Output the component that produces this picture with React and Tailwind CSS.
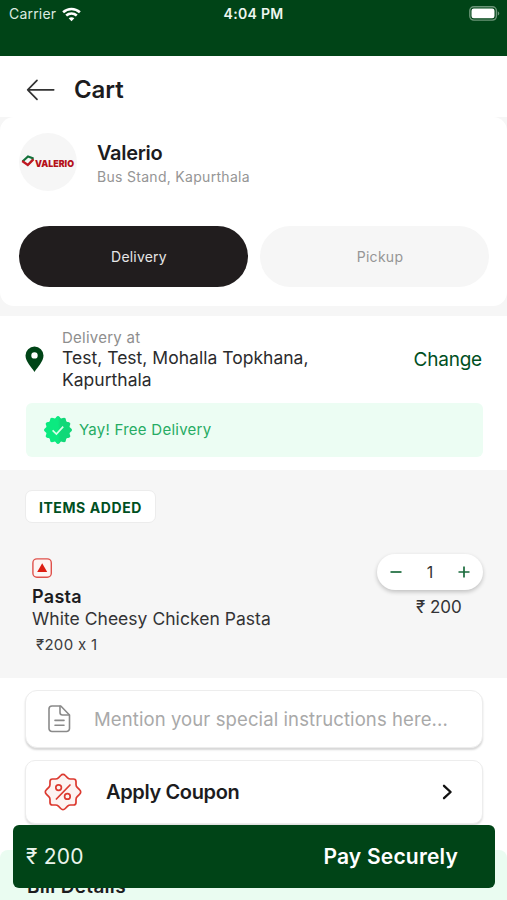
import React from "react";

const SCALLOPS = 12;

function scallopPath(cx, cy, outer, inner) {
  const pts = [];
  for (let i = 0; i < SCALLOPS * 8; i++) {
    const a = (i / (SCALLOPS * 8)) * Math.PI * 2 - Math.PI / 2;
    const r = (outer + inner) / 2 + ((outer - inner) / 2) * Math.cos((a + Math.PI / 2) * SCALLOPS);
    pts.push(`${(cx + r * Math.cos(a)).toFixed(2)} ${(cy + r * Math.sin(a)).toFixed(2)}`);
  }
  return `M${pts.join("L")}Z`;
}

function StatusBar() {
  return (
    <div className="flex h-[56px] items-start justify-between bg-[#004417] pl-[9px] pr-[7px] text-white">
      <div className="flex h-[28px] w-[109px] items-center gap-[6px]">
        <span className="text-[14px] leading-[28px] tracking-[0.2px] text-[#dcebe0]">Carrier</span>
        <svg width="19" height="15" viewBox="0 0 19 15" fill="none" stroke="#fff" strokeWidth="2.6">
          <path d="M1.1 5.2C6 .9 13 .9 17.9 5.2" />
          <path d="M4.2 8.6C7.3 5.9 11.7 5.9 14.8 8.6" />
          <path d="M9.5 14.2L6.7 11.3C8.3 10 10.7 10 12.3 11.3Z" fill="#fff" stroke="none" />
        </svg>
      </div>
      <span className="text-[14px] font-semibold leading-[28px] tracking-[0.3px] text-[#eef6f0]">4:04 PM</span>
      <div className="flex h-[26px] w-[111px] items-center justify-end">
        <svg width="31" height="15" viewBox="0 0 31 15">
          <rect x="0.8" y="0.7" width="26.6" height="13.4" rx="4" fill="none" stroke="#6b9578" strokeWidth="1.4" />
          <rect x="2.5" y="2.5" width="23" height="9.8" rx="2.2" fill="#fff" />
          <path d="M28.8 5.2C30.8 6 30.8 8.8 28.8 9.6Z" fill="#6b9578" />
        </svg>
      </div>
    </div>
  );
}

function Header() {
  return (
    <div className="flex h-[61px] items-center gap-[19px] bg-white pl-[26px] pt-[7px]">
      <svg width="29" height="22" viewBox="0 0 29 22" fill="none" stroke="#333" strokeWidth="1.7" strokeLinecap="round" strokeLinejoin="round">
        <path d="M27.7 10.8H1.7M11 1.3L1.7 10.8L11 20.3" />
      </svg>
      <h1 className="text-[24px] font-semibold leading-[30px] tracking-[-0.1px] text-[#1c1c1e]">Cart</h1>
    </div>
  );
}

function Restaurant() {
  return (
    <section className="h-[199px] bg-[#f6f6f6]">
      <div className="h-[189px] rounded-[14px] bg-white px-[19px] pt-[16px]">
        <div className="flex h-[60px] items-start gap-[20px]">
          <div className="flex size-[58px] shrink-0 items-center justify-center rounded-full bg-[#f6f6f6]">
            <svg width="54" height="16" viewBox="0 0 54 16">
              <path d="M1.5 7.5L7 2.5L12.5 4.5" fill="none" stroke="#12713a" strokeWidth="2.2" />
              <path d="M12.5 4.5L7.5 10.2" fill="none" stroke="#12713a" strokeWidth="1.6" />
              <path d="M1.2 7L6.8 11L12.4 5.4" fill="none" stroke="#c01822" strokeWidth="2.2" />
              <text x="14" y="12.6" fontSize="9.4" fontWeight="900" textLength="39" lengthAdjust="spacingAndGlyphs" fill="#b5121b" fontFamily="Inter, sans-serif">VALERIO</text>
            </svg>
          </div>
          <div className="pt-[8px]">
            <h2 className="text-[20px] font-semibold leading-[25px] tracking-[-0.3px] text-[#1c1c1e]">Valerio</h2>
            <p className="text-[14px] leading-[22px] tracking-[0.3px] text-[#959595]">Bus Stand, Kapurthala</p>
          </div>
        </div>
        <div className="mt-[33px] grid h-[61px] grid-cols-[229px_229px] gap-[12px]">
          <button className="flex items-center justify-center rounded-full bg-[#211d1e] pl-[11px] text-[14px] tracking-[0.2px] text-[#e6e6e6]">Delivery</button>
          <button className="flex items-center justify-center rounded-full bg-[#f6f6f6] pl-[11px] text-[14px] tracking-[0.3px] text-[#959595]">Pickup</button>
        </div>
      </div>
    </section>
  );
}

function Address() {
  return (
    <section className="h-[154px] bg-white px-[25px] pt-[12px]">
      <div className="flex h-[75px] items-start">
        <svg className="mt-[18px] shrink-0" width="19" height="27" viewBox="0 0 19 27">
          <path fillRule="evenodd" d="M9.5.5A9 9 0 0 0 .5 9.5C.5 15.5 6.5 21 9.5 26C12.5 21 18.5 15.5 18.5 9.5A9 9 0 0 0 9.5.5ZM9.5 6.2A3.2 3.2 0 1 1 9.5 12.6A3.2 3.2 0 1 1 9.5 6.2Z" fill="#004417" />
        </svg>
        <div className="ml-[18px] flex-1">
          <p className="text-[15px] leading-[19px] tracking-[0.25px] text-[#8e8e8e]">Delivery at</p>
          <p className="text-[17.5px] leading-[22px] tracking-[0.02px] text-[#2b2b2d]">Test, Test, Mohalla Topkhana,<br />Kapurthala</p>
        </div>
        <button className="mt-[19px] text-[19px] leading-[26px] tracking-[-0.2px] text-[#004f1f]">Change</button>
      </div>
      <div className="ml-[1px] mr-[-1px] flex h-[54px] items-center gap-[7px] rounded-[6px] bg-[#ecfdf3] pl-[18px]">
        <svg width="28" height="28" viewBox="0 0 28 28">
          <defs>
            <linearGradient id="seal" x1="0" y1="0" x2="1" y2="0">
              <stop offset="0.5" stopColor="#0bea80" />
              <stop offset="0.6" stopColor="#10d878" />
            </linearGradient>
          </defs>
          <path d={scallopPath(14, 14, 14, 12)} fill="url(#seal)" />
          <path d="M8.6 14.3L12.4 18L19.2 10.6" fill="none" stroke="#d8ffe9" strokeWidth="1.7" />
        </svg>
        <span className="pt-px text-[15px] tracking-[0.25px] text-[#26ac63]">Yay! Free Delivery</span>
      </div>
    </section>
  );
}

function Items() {
  return (
    <section className="h-[208px] bg-[#f6f6f6] px-[25px] pt-[20px]">
      <div className="flex h-[33px] w-[131px] items-center justify-center rounded-[7px] border border-[#ececec] bg-white pt-px text-[14px] font-bold tracking-[0.6px] text-[#004f1f]">ITEMS ADDED</div>
      <div className="mt-[31px] flex items-start justify-between">
        <div className="pl-[7px] pt-[4px]">
          <svg width="20" height="20" viewBox="0 0 20 20">
            <rect x="0.9" y="0.9" width="18.4" height="18.4" rx="4" fill="#fdf5f4" stroke="#df514b" strokeWidth="1.4" />
            <path d="M10.2 5.2L15.2 14H5.2Z" fill="#dc1e13" />
          </svg>
          <h3 className="mt-[8px] text-[18px] font-semibold leading-[22px] tracking-[0.3px] text-[#1c1c1e]">Pasta</h3>
          <p className="text-[17.5px] leading-[22px] tracking-[0.03px] text-[#333335]">White Cheesy Chicken Pasta</p>
          <p className="pl-[4px] pt-[4px] text-[15px] leading-[21px] tracking-[0.3px] text-[#3b3b3d] [font-feature-settings:'calt'_0]">₹200 x 1</p>
        </div>
        <div className="mr-[-1px] flex w-[106px] flex-col">
          <div className="flex h-[36px] items-center justify-between rounded-full bg-white px-[13px] shadow-[0_2px_4px_rgba(0,0,0,0.22)]">
            <svg width="12" height="12" viewBox="0 0 12 12" stroke="#1a6b3c" strokeWidth="1.7"><path d="M0.5 6H11.5" /></svg>
            <span className="text-[16px] text-[#333]">1</span>
            <svg width="12" height="12" viewBox="0 0 12 12" stroke="#1a6b3c" strokeWidth="1.7"><path d="M0.5 6H11.5M6 .5V11.5" /></svg>
          </div>
          <p className="pl-[39px] pt-[5px] text-[17px] leading-[24px] text-[#333335]">₹ 200</p>
        </div>
      </div>
    </section>
  );
}

function CouponIcon() {
  return (
    <svg width="38" height="38" viewBox="-19 -19 38 38" fill="none" stroke="#dc3a30" strokeWidth="1.7" strokeLinecap="round" strokeLinejoin="round">
      <path
        fill="#fdf3f2"
        d="M0-17.7Q1.2-17.7 2.3-16.5L4.6-14.2Q5.8-13 7.5-13H10.5Q13-13 13-10.5V-7.5Q13-5.8 14.2-4.6L16.5-2.3Q17.7-1.2 17.7 0Q17.7 1.2 16.5 2.3L14.2 4.6Q13 5.8 13 7.5V10.5Q13 13 10.5 13H7.5Q5.8 13 4.6 14.2L2.3 16.5Q1.2 17.7 0 17.7Q-1.2 17.7-2.3 16.5L-4.6 14.2Q-5.8 13-7.5 13H-10.5Q-13 13-13 10.5V7.5Q-13 5.8-14.2 4.6L-16.5 2.3Q-17.7 1.2-17.7 0Q-17.7-1.2-16.5-2.3L-14.2-4.6Q-13-5.8-13-7.5V-10.5Q-13-13-10.5-13H-7.5Q-5.8-13-4.6-14.2L-2.3-16.5Q-1.2-17.7 0-17.7Z"
      />
      <path d="M7-7L-6.6 7" />
      <circle cx="-4.4" cy="-4.4" r="2.8" />
      <circle cx="4.4" cy="4.4" r="2.8" />
    </svg>
  );
}

function Extras() {
  return (
    <section className="h-[172px] bg-white px-[25px] pt-[12px]">
      <div className="flex h-[58px] w-[458px] items-center rounded-[12px] border border-[#ededed] bg-white pl-[22px] shadow-[0_2px_2px_rgba(0,0,0,0.16)]">
        <svg width="23" height="28" viewBox="0 0 23 28" fill="none" stroke="#8a8a8a" strokeWidth="1.6" strokeLinecap="round" strokeLinejoin="round">
          <path d="M12.8 1H4A3 3 0 0 0 1 4V23.5A3 3 0 0 0 4 26.5H18.5A3 3 0 0 0 21.5 23.5V10Z" />
          <path d="M12 1.2V7.5A2.5 2.5 0 0 0 14.5 10H21M7 15.4H16M7 20.2H16" />
        </svg>
        <span className="ml-[23px] pt-[2px] text-[18.5px] tracking-[0.1px] text-[#a9a9a9]">Mention your special instructions here...</span>
      </div>
      <div className="mt-[12px] flex h-[64px] w-[458px] items-center rounded-[10px] border border-[#ededed] bg-white pl-[18px] pr-[29px] shadow-[0_2px_2px_rgba(0,0,0,0.12)]">
        <CouponIcon />
        <span className="ml-[24px] flex-1 text-[20px] font-semibold tracking-[-0.37px] text-[#1c1c1e]">Apply Coupon</span>
        <svg width="11" height="16" viewBox="0 0 11 16" fill="none" stroke="#111" strokeWidth="2.3" strokeLinecap="round" strokeLinejoin="round">
          <path d="M2 1.8L8.6 8L2 14.2" />
        </svg>
      </div>
    </section>
  );
}

export default function App() {
  return (
    <div className="relative h-[900px] w-[507px] overflow-hidden bg-white font-['Inter','Liberation_Sans',sans-serif]">
      <StatusBar />
      <Header />
      <Restaurant />
      <Address />
      <Items />
      <Extras />
      <section className="h-[50px] rounded-t-[8px] bg-[#eafcf1] pl-[27px] pt-[24px]">
        <h3 className="text-[19px] font-semibold leading-[26px] tracking-[0.3px] text-[#1c1c1e]">Bill Details</h3>
      </section>
      <div className="absolute bottom-[12px] left-[13px] flex h-[63px] w-[482px] items-center justify-between rounded-[6px] bg-[#004417] pl-[13px] pr-[37px] text-white">
        <span className="text-[21px] tracking-[0.2px] text-[#eaf4ec]">₹ 200</span>
        <span className="text-[21px] font-semibold tracking-[0.2px]">Pay Securely</span>
      </div>
    </div>
  );
}
